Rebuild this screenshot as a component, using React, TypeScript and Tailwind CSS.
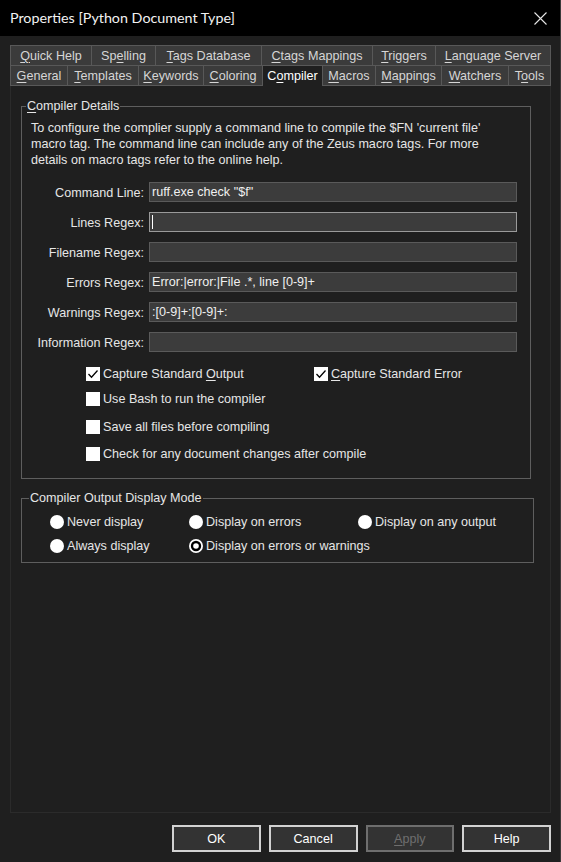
import type React from "react"

interface TabDef {
  label: string
  key: number
  w: string
  active?: boolean
}

const topTabs: TabDef[] = [
  { label: "Quick Help", key: 0, w: "w-[81px]" },
  { label: "Spelling", key: 2, w: "w-[64px]" },
  { label: "Tags Database", key: 0, w: "w-[106px]" },
  { label: "Ctags Mappings", key: 0, w: "w-[111px]" },
  { label: "Triggers", key: 0, w: "w-[63px]" },
  { label: "Language Server", key: 0, w: "w-[116px]" },
]

const bottomTabs: TabDef[] = [
  { label: "General", key: 0, w: "w-[57px]" },
  { label: "Templates", key: 0, w: "w-[71px]" },
  { label: "Keywords", key: 0, w: "w-[65px]" },
  { label: "Coloring", key: 0, w: "w-[59px]" },
  { label: "Compiler", key: 1, w: "w-[60px]", active: true },
  { label: "Macros", key: 0, w: "w-[53px]" },
  { label: "Mappings", key: 0, w: "w-[66px]" },
  { label: "Watchers", key: 0, w: "w-[67px]" },
  { label: "Tools", key: 1, w: "w-[43px]" },
]

const fields = [
  { label: "Command Line:", value: 'ruff.exe check "$f"' },
  { label: "Lines Regex:", value: "", focused: true },
  { label: "Filename Regex:", value: "" },
  { label: "Errors Regex:", value: "Error:|error:|File .*, line [0-9]+" },
  { label: "Warnings Regex:", value: ":[0-9]+:[0-9]+:" },
  { label: "Information Regex:", value: "" },
]

// text with one access-key letter underlined
const Acc: React.FC<{ text: string; at?: number }> = ({ text, at = -1 }) => {
  if (at < 0) return <>{text}</>
  return (
    <>
      {text.slice(0, at)}
      <span className="underline decoration-1 underline-offset-[2px]">{text[at]}</span>
      {text.slice(at + 1)}
    </>
  )
}

const Tab: React.FC<{ tab: TabDef; last: boolean; row2?: boolean }> = ({ tab, last, row2 }) => (
  <div
    className={`${tab.w} flex shrink-0 items-center justify-center border-t border-l border-[#585858] ${
      row2 ? "h-[21px]" : "h-[20px]"
    } ${last ? "border-r" : ""} ${
      tab.active ? "bg-[#1f1f1f] text-white" : `bg-[#3b3b3b] text-[#d6d6d6] ${row2 ? "border-b" : ""}`
    }`}
  >
    <span className="whitespace-nowrap leading-[16px]">
      <Acc text={tab.label} at={tab.key} />
    </span>
  </div>
)

const CheckBox: React.FC<{ checked?: boolean }> = ({ checked }) => (
  <svg width="14" height="14" viewBox="0 0 14 14" className="shrink-0">
    <rect x="0" y="0" width="14" height="14" fill="#ffffff" />
    {checked && <polyline points="2.5,7 5.5,10.2 11.5,3.5" fill="none" stroke="#000" strokeWidth="1.3" />}
  </svg>
)

const Radio: React.FC<{ checked?: boolean }> = ({ checked }) => (
  <svg width="14" height="14" viewBox="0 0 14 14" className="shrink-0">
    <circle cx="7" cy="7" r="7" fill="#ffffff" />
    {checked && (
      <>
        <circle cx="7" cy="7" r="5.2" fill="#000" />
        <circle cx="7" cy="7" r="2.8" fill="#ffffff" />
      </>
    )}
  </svg>
)

const Check: React.FC<{ label: React.ReactNode; checked?: boolean; className?: string }> = ({
  label,
  checked,
  className,
}) => (
  <div className={`flex h-[16px] items-center gap-[3px] ${className ?? ""}`}>
    <CheckBox checked={checked} />
    <span className="whitespace-nowrap leading-[16px]">{label}</span>
  </div>
)

const RadioItem: React.FC<{ label: string; checked?: boolean }> = ({ label, checked }) => (
  <div className="flex h-[16px] items-center gap-[3px]">
    <Radio checked={checked} />
    <span className="whitespace-nowrap leading-[16px]">{label}</span>
  </div>
)

const Btn: React.FC<{ label: React.ReactNode; disabled?: boolean }> = ({ label, disabled }) => (
  <button
    className={`flex h-[27px] w-[89px] items-center justify-center border-2 bg-[#333333] leading-[16px] ${
      disabled ? "border-[#6e6e6e] text-[#6f6f6f]" : "border-[#d2d2d2] text-white"
    }`}
  >
    {label}
  </button>
)

export default function App() {
  return (
    <div className="flex h-[862px] w-[561px] flex-col overflow-hidden border-r border-[#3a3a3a] bg-[#1f1f1f] font-['Liberation_Sans',Arial,sans-serif] text-[12.6px] leading-[16px] text-[#e6e6e6]">
      {/* title bar */}
      <div className="flex h-[36px] shrink-0 items-center justify-between bg-black pl-[10px] pr-[13px]">
        <span className="font-['Lato','Noto_Sans',sans-serif] text-[14.3px] leading-[20px] text-[#f2f2f2]">
          Properties [Python Document Type]
        </span>
        <svg width="13" height="13" viewBox="0 0 13 13">
          <path d="M0.5 0.5 L12.5 12.5 M12.5 0.5 L0.5 12.5" stroke="#e6e6e6" strokeWidth="1.1" />
        </svg>
      </div>

      <div className="flex flex-1 flex-col pt-[9px] pr-[9px] pb-[10px] pl-[10px]">
        {/* tabs */}
        <div className="flex">
          {topTabs.map((t, i) => (
            <Tab key={t.label} tab={t} last={i === topTabs.length - 1} />
          ))}
        </div>
        <div className="flex">
          {bottomTabs.map((t, i) => (
            <Tab key={t.label} tab={t} last={i === bottomTabs.length - 1} row2 />
          ))}
        </div>

        {/* tab page */}
        <div className="flex flex-1 flex-col border border-t-0 border-[#2b2b2b] px-[10px]">
          <fieldset className="mt-[12px] w-[510px] border border-[#5e5e5e] pb-[16px]">
            <legend className="ml-[4px] px-[1px] leading-[16px]">
              <Acc text="Compiler Details" at={0} />
            </legend>
            <div className="mt-[6px] pl-[9px]">
              <div className="whitespace-nowrap">
                To configure the complier supply a command line to compile the $FN 'current file'
              </div>
              <div className="whitespace-nowrap">
                macro tag. The command line can include any of the Zeus macro tags. For more
              </div>
              <div className="whitespace-nowrap">details on macro tags refer to the online help.</div>
            </div>

            <div className="mt-[14px] flex flex-col gap-[10px]">
              {fields.map((f) => (
                <div key={f.label} className="flex h-[20px] items-center">
                  <span className="w-[122px] pt-[2px] text-right whitespace-nowrap">{f.label}</span>
                  <div
                    className={`ml-[5px] flex h-[20px] w-[368px] items-center border bg-[#3c3c3c] px-[2px] text-[#f0f0f0] ${
                      f.focused ? "border-[#9a9a9a]" : "border-[#5a5a5a]"
                    }`}
                  >
                    {f.focused && <span className="h-[14px] w-px bg-white" />}
                    <span className="whitespace-nowrap">{f.value}</span>
                  </div>
                </div>
              ))}
            </div>

            <div className="mt-[14px] flex">
              <Check
                className="ml-[64px] w-[228px]"
                checked
                label={<Acc text="Capture Standard Output" at={17} />}
              />
              <Check checked label={<Acc text="Capture Standard Error" at={0} />} />
            </div>
            <Check className="mt-[9px] ml-[64px]" label="Use Bash to run the compiler" />
            <Check className="mt-[12px] ml-[64px]" label="Save all files before compiling" />
            <Check className="mt-[11px] ml-[64px]" label="Check for any document changes after compile" />
          </fieldset>

          <fieldset className="mt-[11px] w-[513px] border border-[#5e5e5e] pb-[8px]">
            <legend className="ml-[7px] px-[1px] leading-[16px]">Compiler Output Display Mode</legend>
            <div className="mt-[8px] grid grid-cols-[139px_169px_auto] gap-y-[8px] pl-[28px]">
              <RadioItem label="Never display" />
              <RadioItem label="Display on errors" />
              <RadioItem label="Display on any output" />
              <RadioItem label="Always display" />
              <RadioItem label="Display on errors or warnings" checked />
            </div>
          </fieldset>
        </div>

        {/* buttons */}
        <div className="mt-[12px] ml-[162px] flex gap-[8px]">
          <Btn label="OK" />
          <Btn label="Cancel" />
          <Btn label={<Acc text="Apply" at={0} />} disabled />
          <Btn label="Help" />
        </div>
      </div>
    </div>
  )
}
